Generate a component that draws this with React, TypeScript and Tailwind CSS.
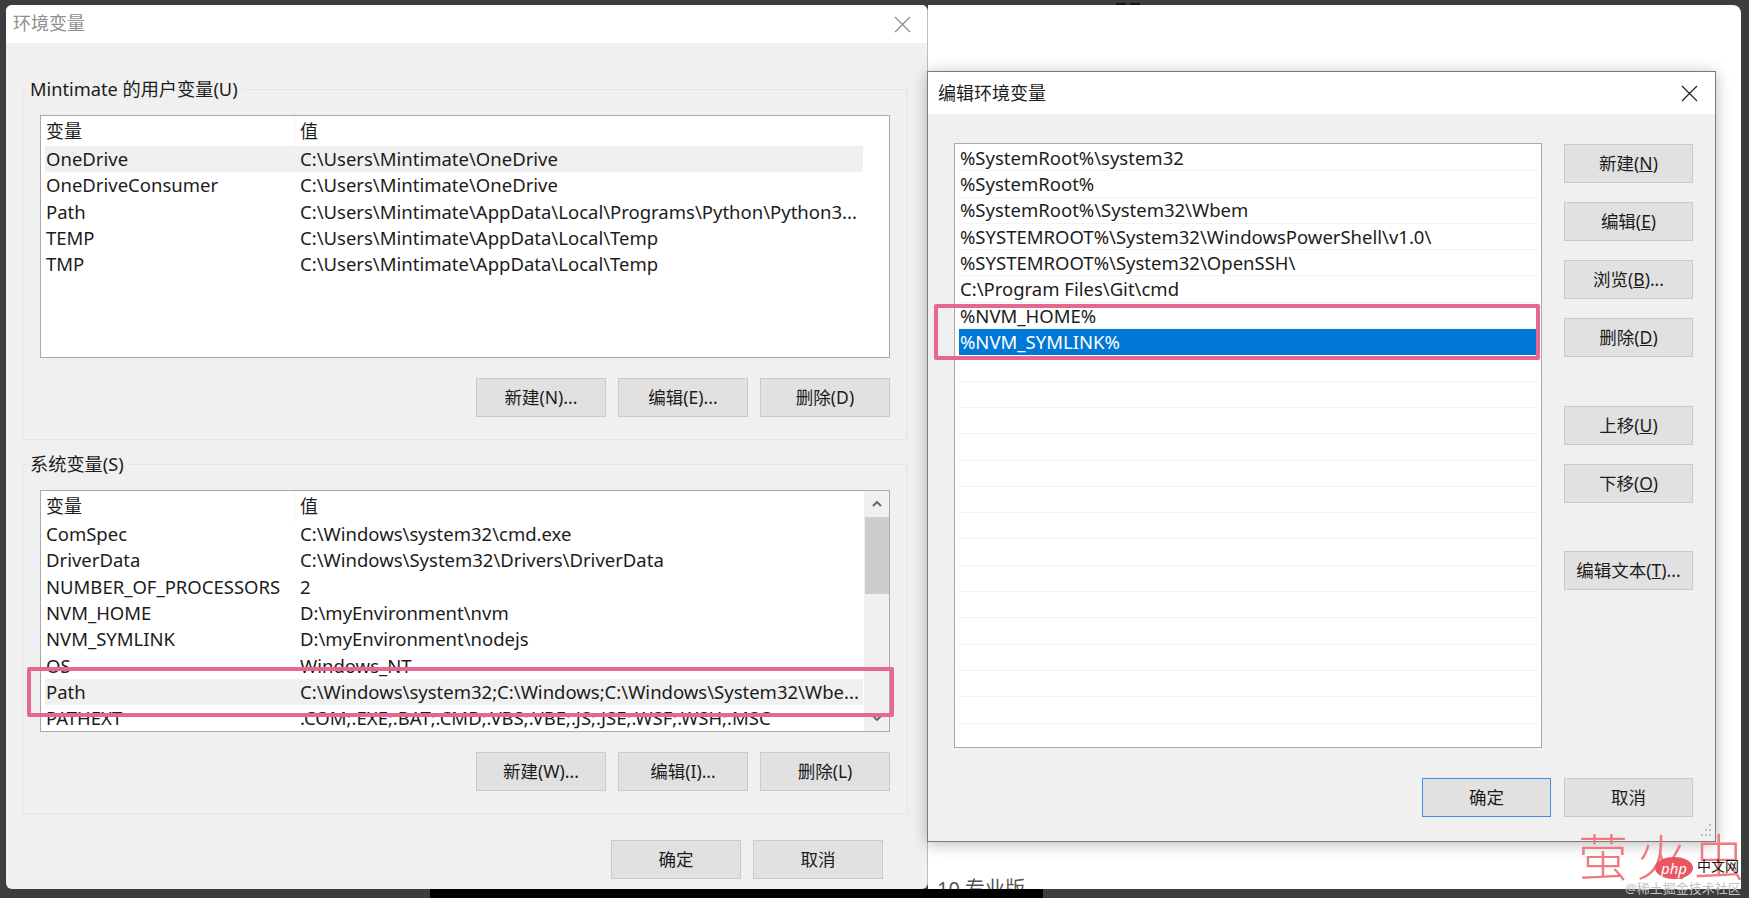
const font = { fontFamily: '"Noto Sans", "Noto Sans CJK SC", sans-serif' };

function Btn({ children, w = "w-[130px]", primary = false }: { children: React.ReactNode; w?: string; primary?: boolean }) {
  return (
    <div
      className={`${w} h-[39px] flex items-center justify-center text-[17.5px] text-[#1c1c1c] bg-[#e1e1e1] border ${
        primary ? "border-[#3f8fdc] border-[1.5px]" : "border-[#cacaca]"
      }`}
    >
      {children}
    </div>
  );
}

function GroupBox({ label, className, children }: { label: string; className: string; children: React.ReactNode }) {
  return (
    <div className={`ml-[16px] mr-[19px] border border-[#e4e4e4] flex flex-col ${className}`}>
      <div className="w-fit -mt-[13px] ml-[3px] px-[4px] bg-[#f0f0f0] h-[25px] leading-[25px] text-[18.2px] text-[#1c1c1c]">{label}</div>
      {children}
    </div>
  );
}

function VarRow({ name, value, active = false }: { name: string; value: string; active?: boolean }) {
  return (
    <div className={`h-[26.3px] shrink-0 flex items-center text-[18.5px] leading-[26px] text-[#1c1c1c] ${active ? "bg-[#f0f0f0]" : ""}`}>
      <div className="w-[255px] pl-[1px] shrink-0 whitespace-nowrap">{name}</div>
      <div className="whitespace-nowrap">{value}</div>
    </div>
  );
}

function VarList({ rows, activeName, scroll = false, height }: { rows: [string, string][]; activeName: string; scroll?: boolean; height: string }) {
  return (
    <div className={`${height} mx-[17px] bg-white border border-[#a9a9a9] flex overflow-hidden`}>
      <div className="w-[818px] ml-[4px] shrink-0 overflow-hidden">
        <div className="h-[30px] flex items-center text-[18px] text-[#1c1c1c]">
          <div className="w-[250px] h-full pl-[1px] flex items-center border-r border-[#f2f2f2]">变量</div>
          <div className="pl-[5px]">值</div>
        </div>
        {rows.map(([n, v]) => (
          <VarRow key={n} name={n} value={v} active={n === activeName} />
        ))}
      </div>
      {scroll && (
        <div className="w-[25px] ml-[1px] bg-[#f0f0f0] flex flex-col items-center">
          <div className="h-[26px] flex items-center justify-center">
            <svg width="10" height="8" viewBox="0 0 10 8"><path d="M1 6 L5 2 L9 6" fill="none" stroke="#606060" strokeWidth="1.8" /></svg>
          </div>
          <div className="w-[24px] h-[77px] bg-[#cdcdcd]" />
          <div className="flex-1" />
          <div className="h-[26px] flex items-center justify-center">
            <svg width="10" height="8" viewBox="0 0 10 8"><path d="M1 2 L5 6 L9 2" fill="none" stroke="#606060" strokeWidth="1.8" /></svg>
          </div>
        </div>
      )}
    </div>
  );
}

const userVars: [string, string][] = [
  ["OneDrive", "C:\\Users\\Mintimate\\OneDrive"],
  ["OneDriveConsumer", "C:\\Users\\Mintimate\\OneDrive"],
  ["Path", "C:\\Users\\Mintimate\\AppData\\Local\\Programs\\Python\\Python3..."],
  ["TEMP", "C:\\Users\\Mintimate\\AppData\\Local\\Temp"],
  ["TMP", "C:\\Users\\Mintimate\\AppData\\Local\\Temp"],
];

const sysVars: [string, string][] = [
  ["ComSpec", "C:\\Windows\\system32\\cmd.exe"],
  ["DriverData", "C:\\Windows\\System32\\Drivers\\DriverData"],
  ["NUMBER_OF_PROCESSORS", "2"],
  ["NVM_HOME", "D:\\myEnvironment\\nvm"],
  ["NVM_SYMLINK", "D:\\myEnvironment\\nodejs"],
  ["OS", "Windows_NT"],
  ["Path", "C:\\Windows\\system32;C:\\Windows;C:\\Windows\\System32\\Wbe..."],
  ["PATHEXT", ".COM;.EXE;.BAT;.CMD;.VBS;.VBE;.JS;.JSE;.WSF;.WSH;.MSC"],
];

const pathEntries = [
  "%SystemRoot%\\system32",
  "%SystemRoot%",
  "%SystemRoot%\\System32\\Wbem",
  "%SYSTEMROOT%\\System32\\WindowsPowerShell\\v1.0\\",
  "%SYSTEMROOT%\\System32\\OpenSSH\\",
  "C:\\Program Files\\Git\\cmd",
  "%NVM_HOME%",
  "%NVM_SYMLINK%",
  "", "", "", "", "", "", "", "", "", "", "", "", "", "", "",
];

function CloseX({ color }: { color: string }) {
  return (
    <svg width="17" height="17" viewBox="0 0 17 17">
      <path d="M1 1 L16 16 M16 1 L1 16" stroke={color} strokeWidth="1.2" fill="none" />
    </svg>
  );
}

function LeftDialog() {
  return (
    <div className="absolute left-[6px] top-[5px] w-[922px] h-[884px] rounded-t-[6px] rounded-b-[6px] overflow-hidden flex flex-col bg-[#f0f0f0] border-r border-[#bdbdbd]">
      <div className="h-[38px] shrink-0 bg-white flex items-center justify-between pl-[7px] pr-[16px]">
        <span className="text-[18px] leading-[30px] -mt-[3px] text-[#8f8f8f]">环境变量</span>
        <CloseX color="#8a8a8a" />
      </div>
      <GroupBox label="Mintimate 的用户变量(U)" className="mt-[46px] h-[351px]">
        <VarList rows={userVars} activeName="OneDrive" height="h-[243px] mt-[13px]" />
        <div className="flex justify-end gap-[12px] mt-[20px] mr-[17px]">
          <Btn>新建(N)...</Btn>
          <Btn>编辑(E)...</Btn>
          <Btn>删除(D)</Btn>
        </div>
      </GroupBox>
      <GroupBox label="系统变量(S)" className="mt-[24px] h-[350px]">
        <VarList rows={sysVars} activeName="Path" scroll height="h-[242px] mt-[13px]" />
        <div className="flex justify-end gap-[12px] mt-[20px] mr-[17px]">
          <Btn>新建(W)...</Btn>
          <Btn>编辑(I)...</Btn>
          <Btn>删除(L)</Btn>
        </div>
      </GroupBox>
      <div className="flex justify-end gap-[12px] mt-[26px] mr-[44px]">
        <Btn>确定</Btn>
        <Btn>取消</Btn>
      </div>
    </div>
  );
}

function RightDialog() {
  return (
    <div className="absolute left-[927px] top-[71px] w-[789px] h-[771px] flex flex-col bg-[#f0f0f0] border border-[#7a7a7a] shadow-[0_2px_14px_rgba(0,0,0,0.28)]">
      <div className="h-[42px] shrink-0 bg-white flex items-center justify-between pl-[10px] pr-[17px]">
        <span className="text-[18px] text-[#1c1c1c]">编辑环境变量</span>
        <CloseX color="#222222" />
      </div>
      <div className="flex pl-[26px] pr-[22px] pt-[29px]">
        <div className="w-[588px] h-[605px] bg-white border border-[#a9a9a9] overflow-hidden px-[4px] pt-[1px] shrink-0">
          {pathEntries.map((e, i) => (
            <div
              key={i}
              className={`h-[26.3px] flex items-center text-[18.5px] pl-[1px] whitespace-nowrap border-b ${
                i === 7 ? "bg-[#0078d7] text-white border-[#0078d7]" : "text-[#1c1c1c] border-[#f4f4f4]"
              }`}
            >
              {e}
            </div>
          ))}
        </div>
        <div className="ml-[22px] mt-[1px] flex flex-col">
          <Btn w="w-[129px]"><span>新建(<u>N</u>)</span></Btn>
          <div className="h-[19px]" />
          <Btn w="w-[129px]"><span>编辑(<u>E</u>)</span></Btn>
          <div className="h-[19px]" />
          <Btn w="w-[129px]"><span>浏览(<u>B</u>)...</span></Btn>
          <div className="h-[19px]" />
          <Btn w="w-[129px]"><span>删除(<u>D</u>)</span></Btn>
          <div className="h-[49px]" />
          <Btn w="w-[129px]"><span>上移(<u>U</u>)</span></Btn>
          <div className="h-[19px]" />
          <Btn w="w-[129px]"><span>下移(<u>O</u>)</span></Btn>
          <div className="h-[48px]" />
          <Btn w="w-[129px]"><span>编辑文本(<u>T</u>)...</span></Btn>
        </div>
      </div>
      <div className="flex justify-end gap-[13px] mt-[30px] pr-[22px]">
        <Btn primary w="w-[129px]">确定</Btn>
        <Btn w="w-[129px]">取消</Btn>
      </div>
      <svg className="absolute right-[2px] bottom-[2px]" width="14" height="16" viewBox="0 0 14 16" fill="#bdbdbd">
        <rect x="10" y="1" width="2" height="2" />
        <rect x="10" y="6" width="2" height="2" />
        <rect x="6" y="6" width="2" height="2" />
        <rect x="10" y="11" width="2" height="2" />
        <rect x="6" y="11" width="2" height="2" />
        <rect x="2" y="11" width="2" height="2" />
      </svg>
    </div>
  );
}

function Watermark() {
  return (
    <div className="absolute left-[1578px] top-[830px] w-[170px] h-[62px]">
      <div className="absolute left-[0px] top-[-3px] text-[50px] leading-[60px] tracking-[8px] font-light text-[#ee7b80] whitespace-nowrap">萤火虫</div>
      <div className="absolute left-[77px] top-[27px] w-[38px] h-[22px] rounded-[50%] bg-[#e95560] flex items-center justify-center text-[15px] italic leading-none text-white">php</div>
      <div className="absolute left-[119px] top-[26px] text-[14px] leading-[20px] text-[#111111] whitespace-nowrap">中文网</div>
      <div className="absolute left-[47px] top-[50px] text-[13px] leading-[16px] text-[#c4c4c4] whitespace-nowrap">@稀土掘金技术社区</div>
    </div>
  );
}

export default function App() {
  return (
    <div className="relative w-[1749px] h-[898px] overflow-hidden bg-[#3d3d3d]" style={font}>
      <div className="absolute left-[430px] top-[889px] w-[613px] h-[9px] bg-black" />
      <div className="absolute left-[507px] top-0 w-[2px] h-[5px] bg-[#5a3038]" />
      <div className="absolute left-[945px] top-0 w-[2px] h-[5px] bg-[#5a3038]" />
      <div className="absolute left-[1116px] top-[3px] w-[10px] h-[2px] bg-[#151515]" />
      <div className="absolute left-[1130px] top-[3px] w-[10px] h-[2px] bg-[#151515]" />
      <div className="absolute left-[928px] top-[5px] w-[813px] h-[884px] bg-white rounded-tr-[8px] overflow-hidden">
        <div className="absolute left-[9px] top-[869px] text-[20px] leading-[30px] text-[#555555] whitespace-nowrap">10 专业版</div>
      </div>
      <LeftDialog />
      <RightDialog />
      <div className="absolute left-[27px] top-[667px] w-[867px] h-[50px] border-[4px] border-[#e6688f] rounded-[2px]" />
      <div className="absolute left-[934px] top-[304px] w-[606px] h-[56px] border-[4px] border-[#e6688f] rounded-[2px]" />
      <Watermark />
    </div>
  );
}
